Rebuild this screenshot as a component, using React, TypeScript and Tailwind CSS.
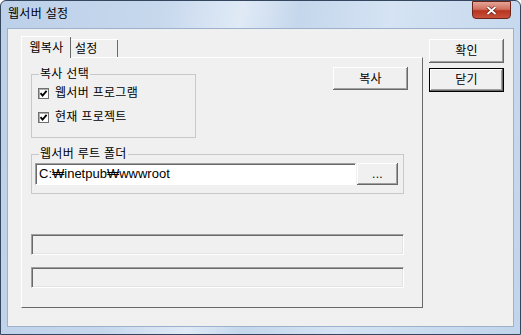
function CheckBox() {
  return (
    <span className="flex h-[11px] w-[11px] shrink-0 items-center justify-center border border-[#707070] bg-white shadow-[inset_1px_1px_0_#b0b0b0]">
      <svg width="9" height="9" viewBox="0 0 9 9">
        <path d="M1.5 4.2 L3.6 6.6 L7.6 1.8" fill="none" stroke="#000" strokeWidth="1.8" />
      </svg>
    </span>
  );
}

function Button({ label, isDefault, className }: { label: string; isDefault?: boolean; className?: string }) {
  return (
    <div
      className={
        "flex items-center justify-center bg-[#f0f0f0] " +
        (isDefault
          ? "border border-black shadow-[inset_-1px_-1px_0_#696969,inset_1px_1px_0_#ffffff,inset_-2px_-2px_0_#a0a0a0] "
          : "shadow-[inset_-1px_-1px_0_#696969,inset_1px_1px_0_#ffffff,inset_-2px_-2px_0_#a0a0a0] ") +
        (className ?? "")
      }
    >
      {label}
    </div>
  );
}

function Sunken({ className }: { className?: string }) {
  return (
    <div
      className={
        "border border-b-white border-l-[#a0a0a0] border-r-white border-t-[#a0a0a0] shadow-[inset_1px_1px_0_#696969,inset_-1px_-1px_0_#e3e3e3] " +
        (className ?? "")
      }
    />
  );
}

export default function App() {
  return (
    <div className="flex h-[335px] w-[521px] flex-col rounded-t-[6px] border border-[#34475e] bg-[linear-gradient(100deg,#bcd0e9_0%,#c7d8ed_28%,#e0eaf6_42%,#c5d7ec_52%,#d5e3f3_68%,#c0d4eb_100%)] font-['Liberation_Sans','Noto_Sans_CJK_KR',sans-serif] text-[12px] text-black">
      {/* title bar */}
      <div className="flex h-[27px] items-start justify-between pl-[7px] pr-[9px]">
        <span className="leading-[27px] tracking-[0.3px]">웹서버 설정</span>
        <div className="flex h-[18px] w-[39px] items-center justify-center rounded-b-[4px] border border-[#6b2419] bg-[linear-gradient(180deg,#e4a597_0%,#d1705f_45%,#b8341f_55%,#c8523c_100%)]">
          <svg width="11" height="9" viewBox="0 0 11 9">
            <path d="M1.5 1 L9.5 8 M9.5 1 L1.5 8" stroke="#5a1c12" strokeWidth="3.2" />
            <path d="M1.5 1 L9.5 8 M9.5 1 L1.5 8" stroke="#ffffff" strokeWidth="1.8" />
          </svg>
        </div>
      </div>

      {/* client area */}
      <div className="mx-[6px] mb-[7px] flex flex-1 items-start border border-[#9cb2cc] bg-[#f0f0f0] pl-[13px] pt-[7px] tracking-[0.3px]">
        <div className="flex flex-col">
          {/* tabs */}
          <div className="flex h-[21px] items-end">
            <div className="relative z-10 -mb-px flex h-[22px] w-[50px] items-center justify-center border-l border-t border-white bg-[#f0f0f0] shadow-[inset_-1px_0_0_#696969]">
              웹복사
            </div>
            <div className="flex h-[18px] w-[47px] items-center border-t border-white pl-[4px] shadow-[inset_-1px_0_0_#696969]">
              설정
            </div>
          </div>

          {/* tab pane */}
          <div className="flex h-[251px] w-[402px] flex-col border border-b-[#696969] border-l-white border-r-[#696969] border-t-white pl-[9px] pr-[14px] pt-[9px]">
            <div className="flex items-start justify-between">
              <fieldset className="w-[165px] border border-[#c8c8c8] pb-[8px] pl-[6px]">
                <legend className="ml-[1px] px-[1px] leading-[14px]">복사 선택</legend>
                <div className="flex h-[24px] items-center gap-[6px]">
                  <CheckBox />
                  <span>웹서버 프로그램</span>
                </div>
                <div className="flex h-[24px] items-center gap-[6px]">
                  <CheckBox />
                  <span>현재 프로젝트</span>
                </div>
              </fieldset>
              <Button label="복사" className="h-[23px] w-[75px]" />
            </div>

            <fieldset className="mt-[9px] w-[373px] border border-[#c8c8c8] pb-[8px] pl-[3px] pt-[2px]">
              <legend className="ml-[4px] px-[1px] leading-[14px]">웹서버 루트 폴더</legend>
              <div className="flex">
                <div className="flex h-[22px] w-[321px] items-center border border-b-white border-l-[#a0a0a0] border-r-white border-t-[#a0a0a0] bg-white pl-[3px] text-[13px] tracking-normal shadow-[inset_1px_1px_0_#696969]">
                  C:₩inetpub₩wwwroot
                </div>
                <Button label="..." className="ml-[1px] h-[22px] w-[41px]" />
              </div>
            </fieldset>

            <Sunken className="mt-[40px] h-[21px] w-[373px]" />
            <Sunken className="mt-[12px] h-[21px] w-[373px]" />
          </div>
        </div>

        {/* dialog buttons */}
        <div className="ml-[6px] mt-[3px] flex flex-col gap-[5px]">
          <Button label="확인" className="h-[24px] w-[75px]" />
          <Button label="닫기" isDefault className="h-[24px] w-[75px]" />
        </div>
      </div>
    </div>
  );
}
